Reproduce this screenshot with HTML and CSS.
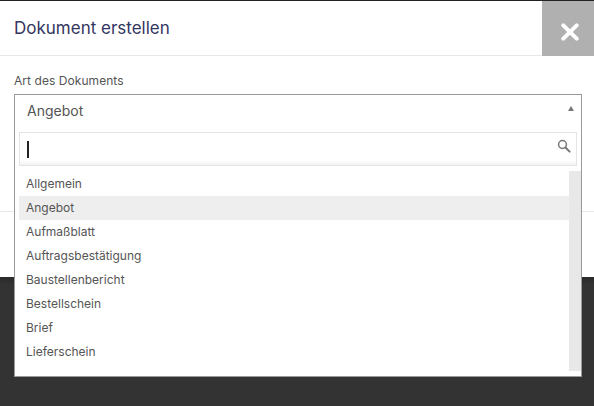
FILE: index.html
```html
<!DOCTYPE html>
<html lang="de">

<head>
    <meta charset="UTF-8">
    <meta name="viewport" content="width=device-width, initial-scale=1.0">
    <title>Dokument erstellen</title>
    <link rel="stylesheet" href="styles.css">
</head>

<body>
    <div class="modal">
        <header class="modal-head">
            <h1>Dokument erstellen</h1>
            <button type="button" class="close" aria-label="Schließen">
                <svg width="18" height="18" viewBox="0 0 18 18">
                    <path d="M2.3 2.3 15.7 15.7M15.7 2.3 2.3 15.7" stroke="#fff" stroke-width="4" stroke-linecap="round" fill="none" />
                </svg>
            </button>
        </header>
        <div class="modal-body">
            <label class="field-label">Art des Dokuments</label>
            <div class="select">
                <div class="select-box">
                    <div class="select-value">
                        <span>Angebot</span>
                        <i class="arrow"></i>
                    </div>
                    <div class="search">
                        <span class="caret"></span>
                        <svg class="search-icon" width="14" height="14" viewBox="0 0 14 14">
                            <circle cx="5.5" cy="5.5" r="3.9" stroke="#777" stroke-width="1.5" fill="none" />
                            <path d="M8.5 8.5 12.6 12.6" stroke="#777" stroke-width="2" stroke-linecap="round" />
                        </svg>
                    </div>
                    <div class="list-wrap">
                        <ul class="list">
                            <li>Allgemein</li>
                            <li class="selected">Angebot</li>
                            <li>Aufmaßblatt</li>
                            <li>Auftragsbestätigung</li>
                            <li>Baustellenbericht</li>
                            <li>Bestellschein</li>
                            <li>Brief</li>
                            <li>Lieferschein</li>
                        </ul>
                        <div class="scrollbar"></div>
                    </div>
                </div>
            </div>
        </div>
    </div>
    <div class="backdrop"></div>
</body>

</html>
```

FILE: styles.css
```css
* {
    box-sizing: border-box;
}

html,
body {
    height: 100%;
}

body {
    display: flex;
    flex-flow: column;
    margin: 0;
    border-top: 1px solid #222;
    font-family: Inter, "Liberation Sans", sans-serif;
    overflow: hidden;
}

.modal {
    height: 276px;
    background-color: #fff;
}

.backdrop {
    flex: 1;
    background: linear-gradient(to bottom, #2a2a2a, #333 8px);
}

.modal-head {
    display: flex;
    justify-content: space-between;
    height: 55px;
    border-bottom: 1px solid #e8e8e8;
    padding-left: 14px;
}

h1 {
    margin: 0;
    font-size: 17px;
    font-weight: 400;
    line-height: 54px;
    color: #33365f;
}

.close {
    display: flex;
    justify-content: center;
    align-items: center;
    width: 52px;
    height: 55px;
    padding: 7px 0 0 4px;
    border: none;
    background-color: #b0b0b0;
}

.modal-body {
    height: 156px;
    padding: 17px 12px 0 14px;
    border-bottom: 1px solid #e8e8e8;
}

.field-label {
    display: block;
    font-size: 12px;
    letter-spacing: 0.06px;
    line-height: 15px;
    color: #555;
    margin-bottom: 6px;
}

.select {
    position: relative;
    width: 568px;
}

.select-box {
    position: absolute;
    top: 0;
    left: 0;
    width: 568px;
    height: 283px;
    border: 1px solid #999;
    background-color: #fff;
}

.select-value {
    display: flex;
    justify-content: space-between;
    height: 37px;
    padding: 6px 7px 0 12px;
    font-size: 14px;
    line-height: 19px;
    color: #555;
}

.arrow {
    width: 0;
    height: 0;
    margin-top: 5px;
    border-left: 3.5px solid transparent;
    border-right: 3.5px solid transparent;
    border-bottom: 5px solid #777;
}

.search {
    display: flex;
    justify-content: space-between;
    height: 34px;
    margin: 0 4px;
    padding: 8px 5px 0 7px;
    border: 1px solid #e4e4e4;
    background: linear-gradient(to bottom, #fff 85%, #f2f2f2);
}

.caret {
    width: 2px;
    height: 17px;
    background-color: #222;
}

.search-icon {
    margin-top: -2px;
}

.list-wrap {
    display: flex;
    padding-left: 4px;
}

.list {
    flex: 1;
    margin: 0;
    padding: 6px 0 0;
    list-style: none;
    font-size: 12px;
    line-height: 24px;
    color: #555;
}

.list li {
    height: 24px;
    padding-left: 7px;
}

.list .selected {
    background-color: #eee;
}

.scrollbar {
    width: 12px;
    height: 200px;
    margin-top: 5px;
    background-color: #e8e8e8;
}
```
